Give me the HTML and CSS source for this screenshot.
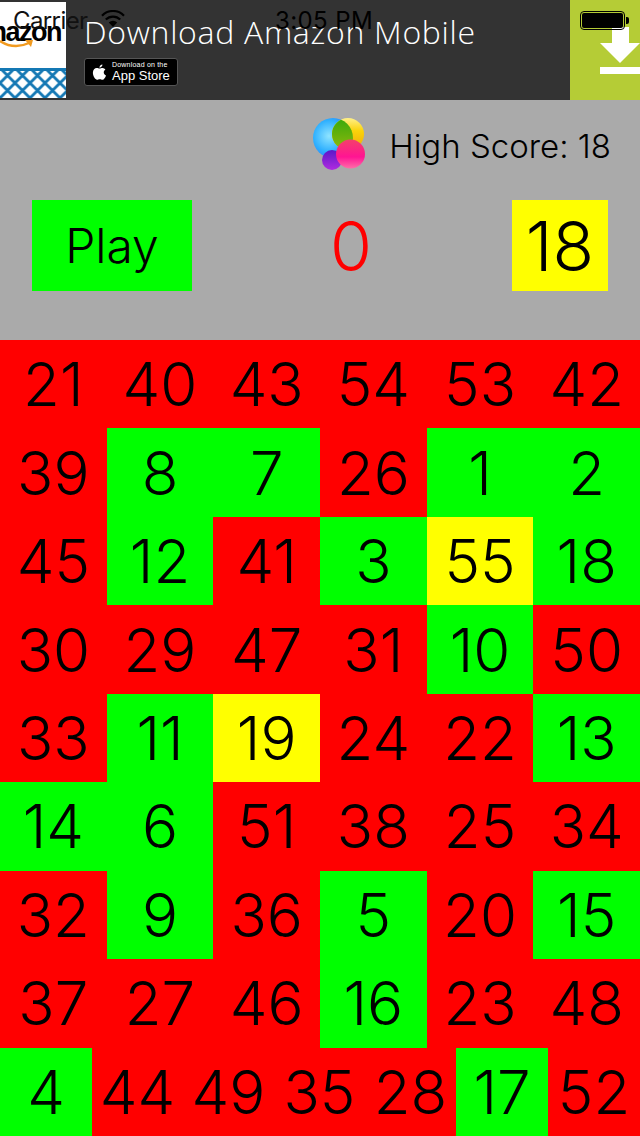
FILE: index.html
```html
<!DOCTYPE html>
<html lang="en">
<head>
  <meta charset="UTF-8">
  <meta name="viewport" content="width=device-width, initial-scale=1.0">
  <title>Number Game</title>
  <link rel="stylesheet" href="styles.css">
</head>
<body>

  <div class="statusbar">
    <div class="status-left">
      <span class="status-carrier">Carrier</span>
      <svg class="wifi" width="26" height="18" viewBox="0 0 26 18">
        <path d="M13 17 L8.8 12.4 A6.2 6.2 0 0 1 17.2 12.4 Z" fill="#000"/>
        <path d="M5.8 9.6 A10 10 0 0 1 20.2 9.6" fill="none" stroke="#000" stroke-width="2.2"/>
        <path d="M2 5.8 A15 15 0 0 1 24 5.8" fill="none" stroke="#000" stroke-width="2.2"/>
      </svg>
    </div>
    <span class="status-time">3:05 PM</span>
    <div class="battery"><div class="battery-fill"></div></div>
  </div>

  <div class="ad">
    <div class="ad-logo">
      <div class="ad-logo-top">
        <span class="ad-logo-word">amazon</span>
        <svg class="ad-smile" width="34" height="12" viewBox="0 0 34 12">
          <path d="M0 2 Q14 11 29 4" fill="none" stroke="#f19a1f" stroke-width="2.4"/>
          <path d="M25 1 L33 1 L31 8 Z" fill="#f19a1f"/>
        </svg>
      </div>
      <svg class="ad-net" width="66" height="30" viewBox="0 0 66 30">
        <defs>
          <pattern id="net" width="15" height="15" patternUnits="userSpaceOnUse" x="7.5" y="0">
            <path d="M7.5 2 L13 7.5 L7.5 13 L2 7.5 Z" fill="#fff"/>
            <path d="M0 -5.5 L5.5 0 L0 5.5 L-5.5 0 Z M15 -5.5 L20.5 0 L15 5.5 L9.5 0 Z M0 9.5 L5.5 15 L0 20.5 L-5.5 15 Z M15 9.5 L20.5 15 L15 20.5 L9.5 15 Z" fill="#fff"/>
          </pattern>
        </defs>
        <rect width="66" height="30" fill="#1478b4"/>
        <rect y="3" width="66" height="27" fill="url(#net)"/>
      </svg>
    </div>
    <div class="ad-body">
      <div class="ad-title">Download Amazon Mobile</div>
      <div class="appstore">
        <svg width="15" height="19" viewBox="0 0 17 20">
          <path d="M11.8 1 C11.9 2.8 10.3 4.6 8.5 4.5 C8.3 2.8 10 1.1 11.8 1 Z M8.6 5.6 C9.6 5.6 10.6 4.8 12 4.8 C13.2 4.9 14.4 5.4 15.2 6.6 C12.4 8.3 12.9 12.2 15.9 13.4 C15.2 15.3 13.6 18.3 11.9 18.3 C10.8 18.3 10.2 17.6 8.8 17.6 C7.4 17.6 6.8 18.3 5.7 18.3 C3.8 18.3 1 14.2 1 10.4 C1 7 3.2 5 5.3 5 C6.7 5 7.7 5.6 8.6 5.6 Z" fill="#fff"/>
        </svg>
        <div class="appstore-text">
          <span class="appstore-small">Download on the</span>
          <span class="appstore-big">App Store</span>
        </div>
      </div>
    </div>
    <div class="ad-download">
      <svg width="40" height="48" viewBox="0 0 40 48">
        <path d="M12 0 H29 V16 H40 L20 36 L0 16 H12 Z" fill="#fff"/>
        <rect y="40" width="40" height="7" fill="#fff"/>
      </svg>
    </div>
  </div>

  <div class="panel">
    <div class="highscore">
      <svg class="gc-icon" width="56" height="56" viewBox="0 0 56 56">
        <defs>
          <radialGradient id="gcBlue" cx="0.4" cy="0.45" r="0.65">
            <stop offset="0" stop-color="#8fe4ff"/>
            <stop offset="0.6" stop-color="#2fb0ff"/>
            <stop offset="1" stop-color="#2a74f5"/>
          </radialGradient>
          <linearGradient id="gcYellow" x1="0" y1="0" x2="0" y2="1">
            <stop offset="0" stop-color="#fff08a"/>
            <stop offset="0.4" stop-color="#fbd30a"/>
            <stop offset="1" stop-color="#eea90a"/>
          </linearGradient>
          <linearGradient id="gcGreen" x1="0" y1="0" x2="0" y2="1">
            <stop offset="0" stop-color="#38a80c"/>
            <stop offset="1" stop-color="#8fb90c"/>
          </linearGradient>
          <linearGradient id="gcPink" x1="0" y1="0" x2="0" y2="1">
            <stop offset="0" stop-color="#f4406a"/>
            <stop offset="0.6" stop-color="#ff1493"/>
            <stop offset="1" stop-color="#ff6ea8"/>
          </linearGradient>
          <linearGradient id="gcPurple" x1="0" y1="0" x2="0" y2="1">
            <stop offset="0" stop-color="#5a18c8"/>
            <stop offset="1" stop-color="#b02be0"/>
          </linearGradient>
          <clipPath id="gcClip"><circle cx="21" cy="21" r="20"/></clipPath>
        </defs>
        <circle cx="21" cy="21" r="20" fill="url(#gcBlue)"/>
        <circle cx="36" cy="17" r="16" fill="url(#gcYellow)"/>
        <circle cx="36" cy="17" r="16" fill="url(#gcGreen)" clip-path="url(#gcClip)"/>
        <circle cx="20" cy="43" r="10" fill="url(#gcPurple)"/>
        <circle cx="38.5" cy="37" r="14.5" fill="url(#gcPink)"/>
      </svg>
      <span class="highscore-text">High Score: 18</span>
    </div>
    <div class="controls">
      <div class="play">Play</div>
      <div class="score">0</div>
      <div class="best">18</div>
    </div>
  </div>

  <div class="board">
    <div class="row">
      <div class="cell">21</div><div class="cell">40</div><div class="cell">43</div><div class="cell">54</div><div class="cell">53</div><div class="cell">42</div>
    </div>
    <div class="row">
      <div class="cell">39</div><div class="cell green">8</div><div class="cell green">7</div><div class="cell">26</div><div class="cell green">1</div><div class="cell green">2</div>
    </div>
    <div class="row">
      <div class="cell">45</div><div class="cell green">12</div><div class="cell">41</div><div class="cell green">3</div><div class="cell yellow">55</div><div class="cell green">18</div>
    </div>
    <div class="row">
      <div class="cell">30</div><div class="cell">29</div><div class="cell">47</div><div class="cell">31</div><div class="cell green">10</div><div class="cell">50</div>
    </div>
    <div class="row">
      <div class="cell">33</div><div class="cell green">11</div><div class="cell yellow">19</div><div class="cell">24</div><div class="cell">22</div><div class="cell green">13</div>
    </div>
    <div class="row">
      <div class="cell green">14</div><div class="cell green">6</div><div class="cell">51</div><div class="cell">38</div><div class="cell">25</div><div class="cell">34</div>
    </div>
    <div class="row">
      <div class="cell">32</div><div class="cell green">9</div><div class="cell">36</div><div class="cell green">5</div><div class="cell">20</div><div class="cell green">15</div>
    </div>
    <div class="row">
      <div class="cell">37</div><div class="cell">27</div><div class="cell">46</div><div class="cell green">16</div><div class="cell">23</div><div class="cell">48</div>
    </div>
    <div class="row row-last">
      <div class="cell green">4</div><div class="cell">44</div><div class="cell">49</div><div class="cell">35</div><div class="cell">28</div><div class="cell green">17</div><div class="cell">52</div>
    </div>
  </div>

</body>
</html>
```

FILE: styles.css
```css
html, body { margin: 0; padding: 0; }
body { width: 640px; height: 1136px; position: relative; overflow: hidden; font-family: Inter, "Liberation Sans", sans-serif; color: #000; background: #aaa; }

/* status bar sits on top of the ad */
.statusbar { position: absolute; top: 0; left: 0; right: 0; height: 40px; z-index: 2; display: flex; align-items: center; justify-content: space-between; padding: 0 15px 0 13px; box-sizing: border-box; font-size: 24px; }
.status-left { display: flex; align-items: center; gap: 11px; color: #111; }
.status-carrier { width: 76px; letter-spacing: -0.6px; white-space: nowrap; }
.status-time { position: absolute; left: 275px; top: 6px; letter-spacing: 0.4px; }
.wifi { display: block; margin-top: -2px; }
.battery { width: 45px; height: 19px; border: 1px solid #000; border-radius: 4px; padding: 1px; box-sizing: border-box; position: relative; }
.battery::after { content: ""; position: absolute; right: -5px; top: 5px; width: 3px; height: 7px; background: #000; border-radius: 0 2px 2px 0; }
.battery-fill { height: 100%; background: #000; border-radius: 2px; }

.ad { height: 100px; display: flex; background: #333; }
.ad-logo { width: 66px; height: 96px; margin-top: 2px; background: #fff; display: flex; flex-direction: column; overflow: hidden; }
.ad-logo-top { height: 66px; position: relative; overflow: hidden; }
.ad-logo-word { position: absolute; right: 5px; top: 15px; font-family: "Liberation Sans", sans-serif; font-size: 27px; font-weight: bold; letter-spacing: -1.5px; white-space: nowrap; }
.ad-smile { position: absolute; left: 0; top: 37px; }
.ad-net { display: block; }
.ad-body { flex: 1; padding: 12px 0 0 18px; }
.ad-title { font-family: "Open Sans", sans-serif; font-weight: 300; font-size: 32px; letter-spacing: 0.7px; line-height: 40px; color: #fff; white-space: nowrap; }
.appstore { margin-top: 6px; width: 85px; height: 26px; background: #000; border: 1px solid #555; border-radius: 3px; display: flex; align-items: center; gap: 5px; padding-left: 7px; color: #fff; font-family: "Liberation Sans", sans-serif; }
.appstore-text { display: flex; flex-direction: column; white-space: nowrap; }
.appstore-small { font-size: 7px; line-height: 8px; letter-spacing: 0.2px; }
.appstore-big { font-size: 13px; line-height: 14px; }
.ad-download { width: 70px; background: #b5cc36; display: flex; justify-content: flex-end; padding-top: 27px; box-sizing: border-box; }

.panel { height: 240px; background: #aaa; }
.highscore { height: 100px; display: flex; align-items: center; justify-content: flex-end; padding-right: 29px; box-sizing: border-box; }
.gc-icon { margin-right: 21px; margin-top: -10px; }
.highscore-text { font-size: 33px; font-weight: 350; margin-top: -9px; }
.controls { display: flex; align-items: stretch; justify-content: space-between; height: 91px; padding: 0 32px; }
.play { width: 160px; background: #0f0; font-size: 48px; font-weight: 350; display: flex; align-items: center; justify-content: center; }
.score { color: #f00; font-size: 68px; font-weight: 350; display: flex; align-items: center; margin-left: -2px; }
.best { width: 96px; background: #ff0; font-size: 68px; font-weight: 350; display: flex; align-items: center; justify-content: center; }

.board { height: 796px; display: flex; flex-direction: column; background: #f00; }
.row { flex: 1; display: flex; }
/* last row has seven cells, widths as the reference rounds them */
.row-last { display: grid; grid-template-columns: 92px repeat(4, 91px) 92px 92px; }
.cell { flex: 1; display: flex; align-items: center; justify-content: center; font-size: 60px; font-weight: 350; background: #f00; }
.green { background: #0f0; }
.yellow { background: #ff0; }
```
